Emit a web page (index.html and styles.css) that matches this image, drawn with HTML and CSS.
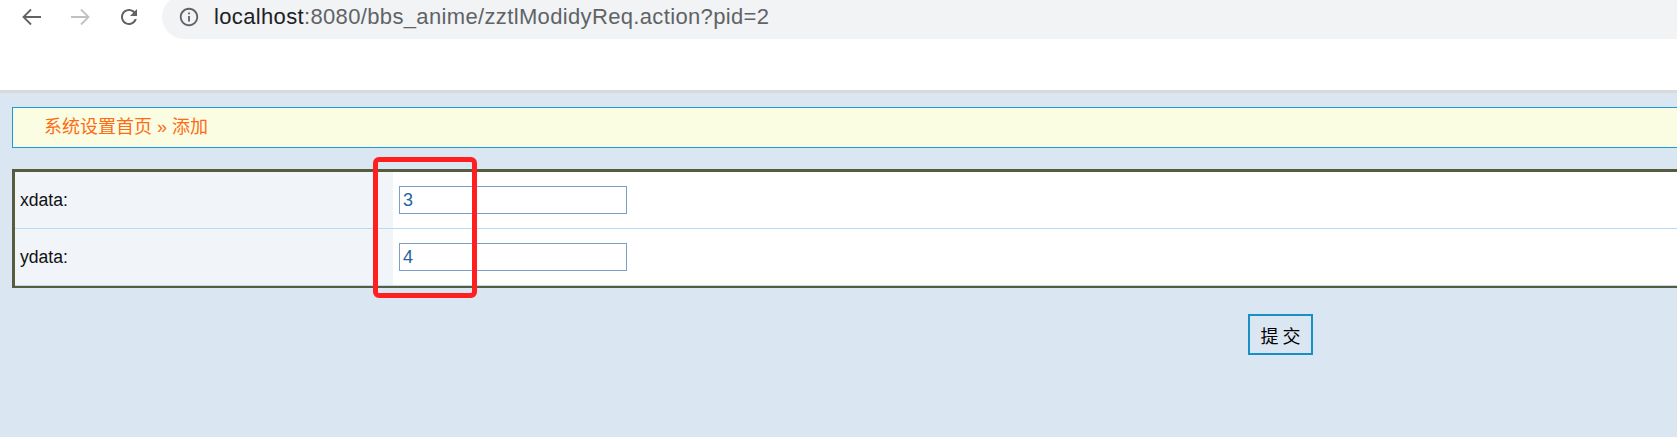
FILE: index.html
```html
<!DOCTYPE html>
<html lang="zh">
<head>
<meta charset="utf-8">
<title>zztlModidyReq</title>
<link rel="stylesheet" href="styles.css">
</head>
<body>
<div class="browser">
  <div class="toolbar">
    <span class="nav-icon">
      <svg viewBox="0 0 24 24" width="24" height="24"><path d="M21 12H4M11 4.5L3.5 12l7.5 7.5" fill="none" stroke="#5f6368" stroke-width="1.8"/></svg>
    </span>
    <span class="nav-icon">
      <svg viewBox="0 0 24 24" width="24" height="24"><path d="M3 12h17M13 4.5l7.5 7.5-7.5 7.5" fill="none" stroke="#bdc1c6" stroke-width="1.8"/></svg>
    </span>
    <span class="nav-icon">
      <svg viewBox="0 0 24 24" width="26" height="26"><path fill="#5f6368" d="M17.65 6.35C16.2 4.9 14.21 4 12 4c-4.42 0-7.990 3.580-7.990 8s3.570 8 7.990 8c3.730 0 6.840-2.550 7.730-6h-2.080c-.820 2.330-3.040 4-5.650 4-3.310 0-6-2.690-6-6s2.690-6 6-6c1.660 0 3.140.690 4.220 1.780L13 11h7V4l-2.350 2.350z"/></svg>
    </span>
    <div class="omnibox">
      <svg class="info" viewBox="0 0 24 24" width="22" height="22"><path fill="#5f6368" d="M11 7h2v2h-2zm0 4h2v6h-2zm1-9C6.48 2 2 6.48 2 12s4.48 10 10 10 10-4.48 10-10S17.52 2 12 2zm0 18c-4.41 0-8-3.590-8-8s3.590-8 8-8 8 3.590 8 8-3.590 8-8 8z"/></svg>
      <span class="url"><span class="host">localhost</span>:8080/bbs_anime/zztlModidyReq.action?pid=2</span>
    </div>
  </div>
</div>
<div class="page">
  <div class="content">
    <div class="crumb">系统设置首页 » 添加</div>
    <div class="form">
      <div class="row">
        <div class="label">xdata:</div>
        <div class="value"><input class="field" type="text" value="3"></div>
      </div>
      <div class="row">
        <div class="label">ydata:</div>
        <div class="value"><input class="field" type="text" value="4"></div>
      </div>
      <div class="mark"></div>
    </div>
    <div class="actions">
      <button class="submit" type="button">提 交</button>
    </div>
  </div>
</div>
</body>
</html>
```
FILE: styles.css
```css
html, body {
  margin: 0;
  padding: 0;
  overflow: hidden;
  height: 100%;
}
body {
  background: #dbe6f3;
  font-family: "Liberation Sans", "Noto Sans CJK SC", sans-serif;
}
.browser {
  background: #ffffff;
  height: 90px;
  border-bottom: 3px solid #dadada;
  overflow: hidden;
}
.toolbar {
  display: flex;
  align-items: center;
  height: 34px;
  padding-left: 20px;
}
.nav-icon {
  display: flex;
  align-items: center;
  justify-content: center;
  width: 24px;
  height: 24px;
}
.nav-icon + .nav-icon {
  margin-left: 24px;
}
.nav-icon:nth-child(3) {
  margin-left: 25px;
}
.omnibox {
  flex: 1;
  display: flex;
  align-items: center;
  height: 44px;
  margin-left: 21px;
  padding-left: 16px;
  background: #f1f3f4;
  border-radius: 22px 0 0 22px;
}
.info {
  flex: none;
}
.url {
  margin-left: 14px;
  font-family: "Liberation Sans", sans-serif;
  font-size: 22px;
  letter-spacing: 0.35px;
  color: #5f6368;
  white-space: nowrap;
}
.host {
  color: #202124;
}
.page {
  padding: 14px 0 0 12px;
}
.content {
  width: 2537px;
}
.crumb {
  height: 39px;
  border: 1px solid #1a9ad6;
  background: #fafde1;
  padding-left: 31px;
  line-height: 39px;
  font-family: "Liberation Sans", "Noto Sans CJK SC", sans-serif;
  font-size: 18px;
  color: #ff6a13;
}
.form {
  position: relative;
  margin-top: 21px;
  border-top: 3px solid #555c3f;
  border-left: 3px solid #555c3f;
  border-bottom: 2px solid #555c3f;
}
.row {
  display: grid;
  grid-template-columns: 378px 1fr;
  height: 56px;
  border-bottom: 1px solid #b8dbf1;
}
.row:last-of-type {
  height: 57px;
}
.label {
  display: flex;
  align-items: center;
  padding-left: 5px;
  background: #f1f5f9;
  font-size: 17.6px;
  color: #111111;
}
.value {
  display: flex;
  align-items: center;
  padding-left: 6px;
  background: #ffffff;
}
.field {
  box-sizing: border-box;
  width: 228px;
  height: 28px;
  margin: 0;
  padding: 0 3px;
  border: 1px solid #7d9ec8;
  border-radius: 0;
  outline: none;
  font-family: "Liberation Sans", sans-serif;
  font-size: 18px;
  color: #23649f;
  background: #ffffff;
}
.mark {
  position: absolute;
  left: 358px;
  top: -15px;
  width: 94px;
  height: 131px;
  border: 5px solid #ff1f1f;
  border-radius: 6px;
}
.actions {
  display: flex;
  justify-content: center;
  margin-top: 26px;
}
.submit {
  box-sizing: border-box;
  width: 65px;
  height: 41px;
  margin: 0;
  padding: 0;
  border: 2px solid #1a8fc6;
  background: transparent;
  font-family: "Noto Sans CJK SC", sans-serif;
  font-size: 18px;
  color: #000000;
}
```
